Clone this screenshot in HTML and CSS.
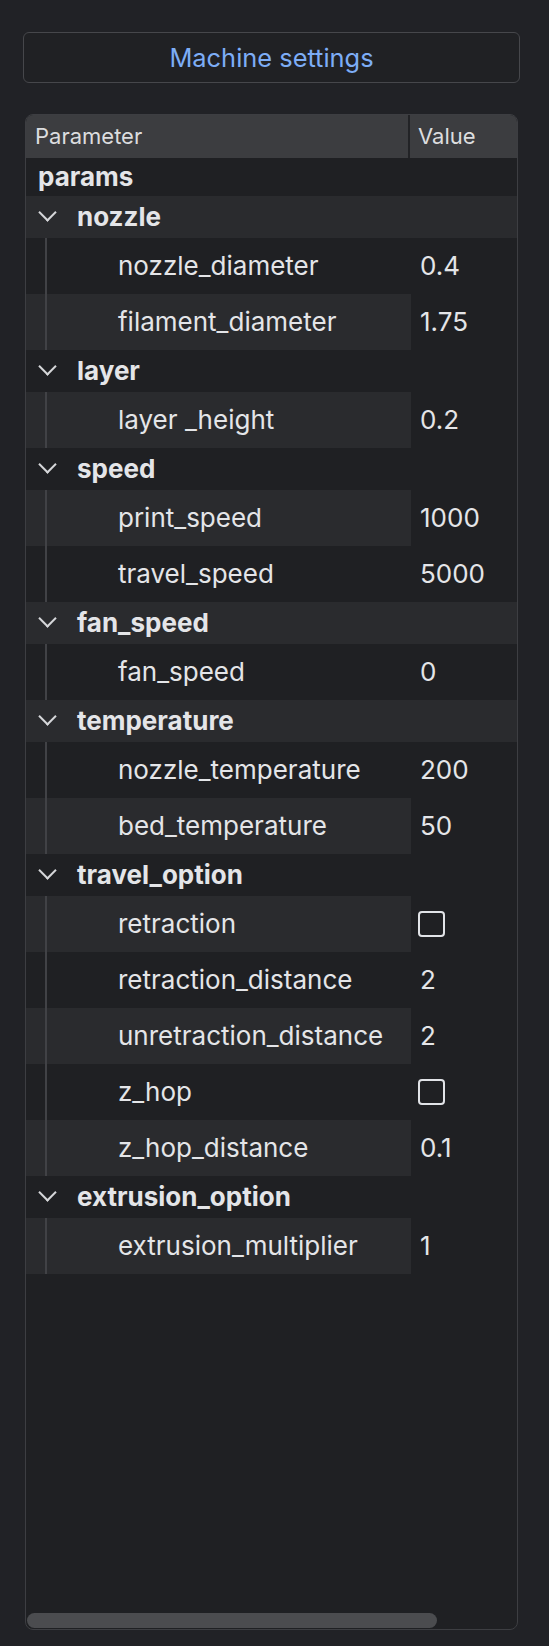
FILE: index.html
```html
<!DOCTYPE html>
<html>
<head>
<meta charset="utf-8">
<link rel="stylesheet" href="styles.css">
</head>
<body>
<div class="panel">
  <button class="btn">Machine settings</button>
  <div class="tree">
    <div class="head">
      <div class="h-param">Parameter</div>
      <div class="h-value">Value</div>
    </div>
    <div class="rows">
      <div class="row root"><div class="c-param"><span class="root-name">params</span></div><div class="c-value"></div></div>

      <div class="row group alt"><div class="c-param"><span class="chev"></span><span class="g-name">nozzle</span></div><div class="c-value"></div></div>
      <div class="row child"><div class="c-param"><span class="line"></span><span class="k">nozzle_diameter</span></div><div class="c-value">0.4</div></div>
      <div class="row child alt"><div class="c-param"><span class="line"></span><span class="k">filament_diameter</span></div><div class="c-value">1.75</div></div>

      <div class="row group"><div class="c-param"><span class="chev"></span><span class="g-name">layer</span></div><div class="c-value"></div></div>
      <div class="row child alt"><div class="c-param"><span class="line"></span><span class="k">layer _height</span></div><div class="c-value">0.2</div></div>

      <div class="row group"><div class="c-param"><span class="chev"></span><span class="g-name">speed</span></div><div class="c-value"></div></div>
      <div class="row child alt"><div class="c-param"><span class="line"></span><span class="k">print_speed</span></div><div class="c-value">1000</div></div>
      <div class="row child"><div class="c-param"><span class="line"></span><span class="k">travel_speed</span></div><div class="c-value">5000</div></div>

      <div class="row group alt"><div class="c-param"><span class="chev"></span><span class="g-name">fan_speed</span></div><div class="c-value"></div></div>
      <div class="row child"><div class="c-param"><span class="line"></span><span class="k">fan_speed</span></div><div class="c-value">0</div></div>

      <div class="row group alt"><div class="c-param"><span class="chev"></span><span class="g-name">temperature</span></div><div class="c-value"></div></div>
      <div class="row child"><div class="c-param"><span class="line"></span><span class="k">nozzle_temperature</span></div><div class="c-value">200</div></div>
      <div class="row child alt"><div class="c-param"><span class="line"></span><span class="k">bed_temperature</span></div><div class="c-value">50</div></div>

      <div class="row group"><div class="c-param"><span class="chev"></span><span class="g-name">travel_option</span></div><div class="c-value"></div></div>
      <div class="row child alt"><div class="c-param"><span class="line"></span><span class="k">retraction</span></div><div class="c-value"><span class="check"></span></div></div>
      <div class="row child"><div class="c-param"><span class="line"></span><span class="k">retraction_distance</span></div><div class="c-value">2</div></div>
      <div class="row child alt"><div class="c-param"><span class="line"></span><span class="k">unretraction_distance</span></div><div class="c-value">2</div></div>
      <div class="row child"><div class="c-param"><span class="line"></span><span class="k">z_hop</span></div><div class="c-value"><span class="check"></span></div></div>
      <div class="row child alt"><div class="c-param"><span class="line"></span><span class="k">z_hop_distance</span></div><div class="c-value">0.1</div></div>

      <div class="row group"><div class="c-param"><span class="chev"></span><span class="g-name">extrusion_option</span></div><div class="c-value"></div></div>
      <div class="row child alt"><div class="c-param"><span class="line"></span><span class="k">extrusion_multiplier</span></div><div class="c-value">1</div></div>
    </div>
    <div class="scroll"><div class="thumb"></div></div>
  </div>
</div>
</body>
</html>
```

FILE: styles.css
```css
* { box-sizing: border-box; }
html, body {
  margin: 0;
  padding: 0;
  background: #212226;
  font-family: Inter, "Noto Sans", sans-serif;
  color: #e4e5e8;
}
.panel {
  width: 549px;
  height: 1646px;
  padding: 32px 0 0 0;
  display: flex;
  flex-direction: column;
}
.btn {
  margin-left: 23px;
  width: 497px;
  height: 51px;
  background: #202124;
  border: 1px solid #46474b;
  border-radius: 6px;
  color: #7dadf6;
  font-family: Inter, "Noto Sans", sans-serif;
  font-size: 25.4px;
  padding: 0;
  line-height: 49px;
}
.tree {
  margin-top: 31px;
  margin-left: 25px;
  width: 493px;
  height: 1516px;
  border: 1px solid #3d3e42;
  border-radius: 8px;
  overflow: hidden;
  background: #1f2023;
  display: flex;
  flex-direction: column;
}
.head {
  height: 43px;
  display: flex;
  background: #3c3d40;
  font-size: 22px;
  color: #dcdddf;
  line-height: 43px;
  flex: none;
}
.h-param {
  width: 384px;
  padding-left: 9px;
  border-right: 2px solid #222326;
}
.h-value {
  flex: 1;
  padding-left: 8px;
}
.rows {
  display: flex;
  flex-direction: column;
}
.row {
  display: flex;
  font-size: 26px;
}
.root { height: 38px; line-height: 38px; }
.group { height: 42px; line-height: 42px; }
.child { height: 56px; line-height: 56px; }
.c-param {
  width: 385px;
  display: flex;
  align-items: center;
  white-space: nowrap;
}
.c-value {
  flex: 1;
  padding-left: 9px;
  display: flex;
  align-items: center;
}
.group.alt { background: #2a2b2e; }
.child.alt .c-param { background: #2a2b2e; }
.root-name {
  font-weight: 700;
  margin-left: 12px;
}
.chev {
  width: 13px;
  height: 13px;
  margin-left: 15px;
  margin-top: -9px;
  border-right: 2.6px solid #d6d7da;
  border-bottom: 2.6px solid #d6d7da;
  transform: rotate(45deg);
  flex: none;
}
.g-name {
  font-weight: 700;
  margin-left: 23px;
}
.line {
  width: 2px;
  height: 100%;
  margin-left: 19px;
  background: #414246;
  flex: none;
}
.k {
  margin-left: 71px;
}
.check {
  width: 27px;
  height: 26px;
  border: 2.4px solid #e1e3e7;
  border-radius: 4px;
  margin-left: -2px;
}
.scroll {
  margin-top: auto;
  height: 16px;
  padding: 0 0 1px 1px;
}
.thumb {
  width: 410px;
  height: 15px;
  border-radius: 8px;
  background: #4b4c4f;
}
```
